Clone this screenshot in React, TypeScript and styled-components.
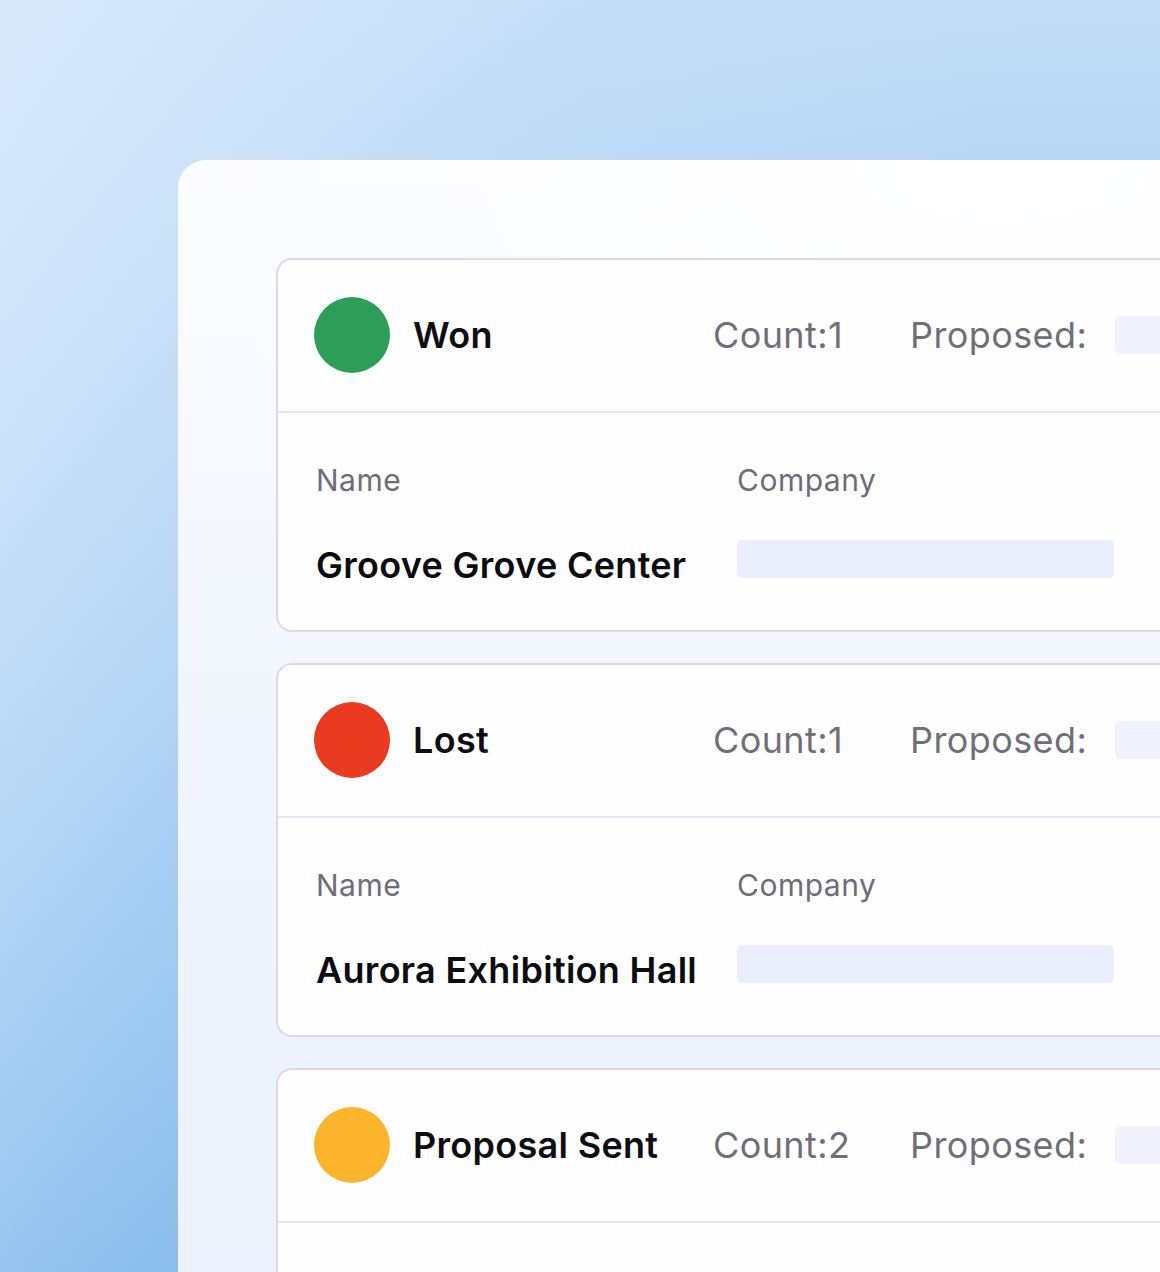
import styled, {createGlobalStyle} from 'styled-components';

const GlobalStyle = createGlobalStyle`
  html, body {
    margin: 0;
    padding: 0;
  }
  body {
    font-family: Inter, "Noto Sans", "Liberation Sans", sans-serif;
    -webkit-font-smoothing: antialiased;
  }
`;

const Backdrop = styled.div`
  width: 1160px;
  height: 1272px;
  overflow: hidden;
  box-sizing: border-box;
  padding: 160px 0 0 178px;
  background:
    linear-gradient(115deg, rgba(218,234,252,0.95) 0%, rgba(200,224,248,0.4) 35%, rgba(180,214,245,0) 60%),
    linear-gradient(180deg, #c2ddf7 0%, #a2cbf2 40%, #89bfee 70%, #74b1e8 100%);
`;

const Panel = styled.div`
  width: 1100px;
  height: 1200px;
  box-sizing: border-box;
  padding: 98px 0 0 98px;
  border-radius: 28px 0 0 0;
  background:
    radial-gradient(ellipse 900px 520px at 75% 0%, #ffffff 0%, rgba(255,255,255,0) 100%),
    linear-gradient(180deg, #fbfcff 0%, #eef4fd 60%, #ecf2fd 100%);
  display: flex;
  flex-direction: column;
  gap: 31px;
`;

const Card = styled.section`
  width: 960px;
  flex-shrink: 0;
  background: #fefeff;
  border: 2px solid #d9d8ee;
  border-right: none;
  border-radius: 16px 0 0 16px;
`;

const Header = styled.div`
  height: 153px;
  box-sizing: border-box;
  display: flex;
  align-items: center;
  padding: 0 0 1px 36px;
  border-bottom: 2px solid #e6e6f3;
`;

const Dot = styled.span<{$color: string}>`
  width: 76px;
  height: 76px;
  border-radius: 50%;
  background: ${p => p.$color};
  flex-shrink: 0;
`;

const Title = styled.h2`
  margin: 0 0 0 23px;
  width: 300px;
  font-size: 36px;
  font-weight: 600;
  color: #0d0d12;
  letter-spacing: 0.3px;
`;

const Stat = styled.span<{$width?: number}>`
  font-size: 36px;
  font-weight: 400;
  color: #6f6f79;
  letter-spacing: 0.4px;
  width: ${p => (p.$width ? `${p.$width}px` : 'auto')};
`;

const Bar = styled.div<{$width: number; $tone?: string}>`
  width: ${p => p.$width}px;
  height: 38px;
  border-radius: 5px;
  background: ${p => p.$tone || '#e8eefb'};
  flex-shrink: 0;
`;

const HeaderBar = styled(Bar)`
  margin-left: 28px;
`;

const Body = styled.div`
  display: grid;
  grid-template-columns: 421px 377px;
  row-gap: 46px;
  min-height: 124px;
  padding: 49px 0 44px 38px;
  align-items: center;
`;

const Label = styled.div`
  font-size: 30px;
  line-height: 36px;
  color: #6d6d78;
  font-weight: 400;
  letter-spacing: 0.5px;
`;

const Value = styled.div`
  font-size: 36px;
  line-height: 42px;
  font-weight: 600;
  color: #0b0b10;
  letter-spacing: 0.3px;
  white-space: nowrap;
`;

const ValueBar = styled(Bar)`
  margin-top: -12px;
`;

type Stage = {
  name: string;
  color: string;
  count: number;
  lead?: string;
};

const stages: Stage[] = [
  {name: 'Won', color: '#2d9d58', count: 1, lead: 'Groove Grove Center'},
  {name: 'Lost', color: '#ea3a1f', count: 1, lead: 'Aurora Exhibition Hall'},
  {name: 'Proposal Sent', color: '#fcb42c', count: 2},
];

const App = () => {
  return (
    <>
      <GlobalStyle/>
      <Backdrop>
        <Panel>
          {stages.map(s => (
            <Card key={s.name}>
              <Header>
                <Dot $color={s.color}/>
                <Title>{s.name}</Title>
                <Stat $width={197}>Count:{s.count}</Stat>
                <Stat>Proposed:</Stat>
                <HeaderBar $width={120} $tone="#f0f3fd"/>
              </Header>
              <Body>
                {s.lead && (
                  <>
                    <Label>Name</Label>
                    <Label>Company</Label>
                    <Value>{s.lead}</Value>
                    <ValueBar $width={377}/>
                  </>
                )}
              </Body>
            </Card>
          ))}
        </Panel>
      </Backdrop>
    </>
  );
};

export default App;
